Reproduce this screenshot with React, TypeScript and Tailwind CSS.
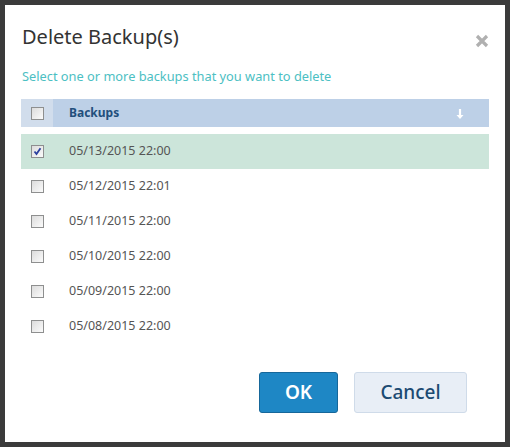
import React from "react";

const backups = [
  { label: "05/13/2015 22:00", checked: true },
  { label: "05/12/2015 22:01", checked: false },
  { label: "05/11/2015 22:00", checked: false },
  { label: "05/10/2015 22:00", checked: false },
  { label: "05/09/2015 22:00", checked: false },
  { label: "05/08/2015 22:00", checked: false },
];

const Box = ({ checked }: { checked?: boolean }) => (
  <span className="relative block w-[13px] h-[13px] border border-[#8e8f8f] bg-gradient-to-br from-[#dcdcdc] to-[#fbfbfb]">
    {checked && (
      <svg viewBox="0 0 11 11" className="absolute inset-0 w-[11px] h-[11px]">
        <path d="M2.5 5.5 L4.5 8 L8.5 2.2" fill="none" stroke="#2b3f9e" strokeWidth="1.8" />
      </svg>
    )}
  </span>
);

export default function App() {
  return (
    <div className="w-[510px] h-[447px] bg-[#3b3b3b] p-[5px]" style={{ fontFamily: '"Noto Sans", "Open Sans", sans-serif' }}>
      <div className="h-full bg-white flex flex-col px-[16px] pt-[20px]">
        <div className="flex items-center justify-between">
          <h2 className="ml-[1px] text-[20px] leading-[24px] text-[#333]">Delete Backup(s)</h2>
          <svg viewBox="0 0 14 14" className="w-[14px] h-[14px] mt-[7px]">
            <path d="M2 2 L12 12 M12 2 L2 12" stroke="#b0b0b0" strokeWidth="3.2" />
          </svg>
        </div>
        <p className="mt-[18px] ml-[1px] text-[12.8px] leading-[18px] text-[#4cc0c3]">
          Select one or more backups that you want to delete
        </p>
        <div className="mt-[14px] flex h-[28px] bg-[#bdd0e7]">
          <div className="w-[32px] bg-[#d1ddec] flex items-center justify-center">
            <Box />
          </div>
          <div className="flex-1 flex items-center justify-between pl-[16px] pr-[25px]">
            <span className="text-[12px] font-bold text-[#234f7c]">Backups</span>
            <svg viewBox="0 0 8 10" className="w-[8px] h-[10px] mt-[2px] shrink-0">
              <path d="M2.9 0 H5.1 V6 H7.5 L4 10 L0.5 6 H2.9 Z" fill="#ffffff" />
            </svg>
          </div>
        </div>
        <div className="mt-[7px] flex flex-col">
          {backups.map((b) => (
            <div
              key={b.label}
              className={`flex items-center h-[35px] ${b.checked ? "bg-[#cce5da]" : ""}`}
            >
              <div className="w-[32px] flex justify-center">
                <Box checked={b.checked} />
              </div>
              <span className="pl-[16px] text-[12.5px] text-[#555]">{b.label}</span>
            </div>
          ))}
        </div>
        <div className="mt-[28px] flex justify-end gap-[16px] pr-[22px]">
          <button className="w-[79px] h-[41px] rounded-[3px] bg-[#1e87c5] border border-[#16679a] text-white text-[19px] font-semibold">
            OK
          </button>
          <button className="w-[113px] h-[41px] rounded-[3px] bg-[#e8eef6] border border-[#cfdbe9] text-[#1b4a72] text-[19px] font-medium">
            Cancel
          </button>
        </div>
      </div>
    </div>
  );
}
